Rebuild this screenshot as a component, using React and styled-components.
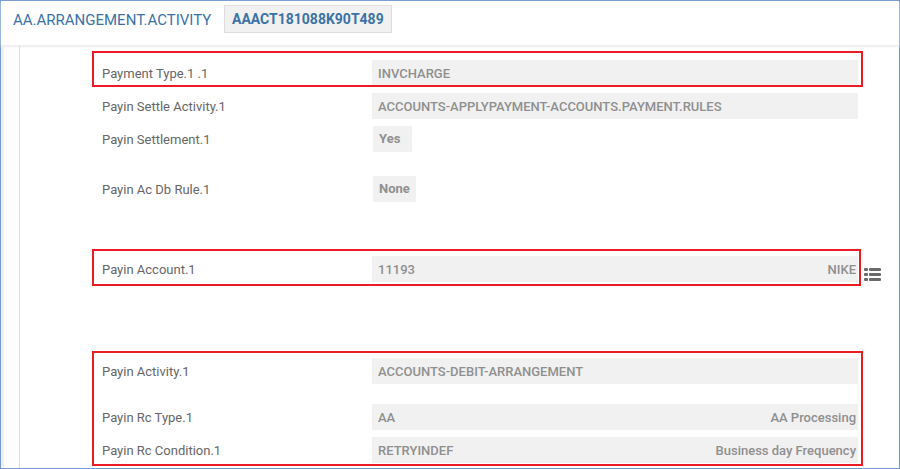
import React from 'react';
import styled, { createGlobalStyle } from 'styled-components';

const GlobalStyle = createGlobalStyle`
  * {
    box-sizing: border-box;
  }
  body {
    margin: 0;
    background: #fff;
    font-family: Roboto, 'Liberation Sans', sans-serif;
    font-size: 13px;
  }
`;

const Frame = styled.div`
  display: flex;
  flex-direction: column;
  min-height: 100vh;
  border: 1px solid #7199cd;
`;

const Header = styled.header`
  display: flex;
  align-items: flex-start;
  gap: 12px;
  height: 45px;
  padding: 4px 12px;
  color: #3a72a8;
  border-bottom: 1px solid #eee;
  box-shadow: 0 1px 2px #eee;
`;

const Title = styled.h1`
  min-width: 199px;
  margin: 0;
  font-size: 15px;
  font-weight: 400;
  line-height: 30px;
`;

const Reference = styled.span`
  padding: 0 7px;
  border: 1px solid #ddd;
  background: #f1f1f1;
  font-size: 14px;
  font-weight: 700;
  line-height: 26px;
`;

const Body = styled.main`
  flex: 1;
  display: flex;
  padding-left: 15px;
  border-left: 3px solid #f0eff1;
`;

const Form = styled.form`
  flex: 1;
  padding: 14px 18px 5px 82px;
  border-left: 1px solid #ddd;
`;

const Group = styled.div`
  position: relative;
  display: grid;
  gap: 7px;
  margin-bottom: ${props => props.$space || 0}px;
`;

// red marker drawn over the rows
const Marker = styled.div`
  position: absolute;
  top: ${props => props.$top}px;
  right: ${props => props.$right}px;
  bottom: ${props => props.$bottom}px;
  left: -10px;
  border: 2px solid #ed1c24;
  pointer-events: none;
`;

const Row = styled.div`
  display: grid;
  grid-template-columns: 264px 1fr 17px;
  column-gap: 6px;
  align-items: center;
  height: 26px;
  margin-bottom: ${props => props.$space || 0}px;
`;

const Label = styled.label`
  color: #666;
`;

const Field = styled.div`
  display: flex;
  align-items: center;
  height: 26px;
  padding: 0 2px 0 6px;
  background: #f1f1f1;
  color: #8f8f8f;
  font-weight: 500;
`;

const Input = styled.input`
  flex: 1;
  min-width: 0;
  padding: 0;
  border: 0;
  outline: 0;
  background: none;
  color: inherit;
  font: inherit;
`;

const Option = styled.output`
  justify-self: start;
  margin-left: 1px;
  padding: 0 6px;
  min-width: 39px;
  background: #f1f1f1;
  color: #8f8f8f;
  font-weight: 700;
  line-height: 26px;
`;

const ListButton = styled.button`
  display: flex;
  align-self: end;
  padding: 0;
  border: 0;
  background: none;
  color: #6a6a6a;
  cursor: pointer;
`;

const ListIcon = () => (
  <svg width="17" height="15" viewBox="0 0 17 15" fill="currentColor" aria-hidden="true">
    <rect y="1" width="4" height="3" rx="1" />
    <rect y="6" width="4" height="3" rx="1" />
    <rect y="11" width="4" height="3" rx="1" />
    <rect x="5" y="1" width="12" height="3" rx="1" />
    <rect x="5" y="6" width="12" height="3" rx="1" />
    <rect x="5" y="11" width="12" height="3" rx="1" />
  </svg>
);

const TextRow = ({ id, label, value, note, space, children }) => (
  <Row $space={space}>
    <Label htmlFor={id}>{label}</Label>
    <Field>
      <Input id={id} value={value} readOnly />
      {note && <span>{note}</span>}
    </Field>
    {children}
  </Row>
);

const OptionRow = ({ id, label, value, space }) => (
  <Row $space={space}>
    <Label htmlFor={id}>{label}</Label>
    <Option id={id}>{value}</Option>
  </Row>
);

const App = () => (
  <>
    <GlobalStyle />
    <Frame>
      <Header>
        <Title>AA.ARRANGEMENT.ACTIVITY</Title>
        <Reference>AAACT181088K90T489</Reference>
      </Header>
      <Body>
        <Form>
          <Group $space={7}>
            <TextRow id="payment-type" label="Payment Type.1 .1" value="INVCHARGE" />
            <Marker $top={-9} $right={18} $bottom={-1} />
          </Group>

          <Group $space={54}>
            <TextRow
              id="settle-activity"
              label="Payin Settle Activity.1"
              value="ACCOUNTS-APPLYPAYMENT-ACCOUNTS.PAYMENT.RULES"
            />
            <OptionRow id="settlement" label="Payin Settlement.1" value="Yes" space={17} />
            <OptionRow id="db-rule" label="Payin Ac Db Rule.1" value="None" />
          </Group>

          <Group $space={76}>
            <TextRow id="account" label="Payin Account.1" value="11193" note="NIKE">
              <ListButton type="button" aria-label="Account list">
                <ListIcon />
              </ListButton>
            </TextRow>
            <Marker $top={-7} $right={20} $bottom={-4} />
          </Group>

          <Group>
            <TextRow id="activity" label="Payin Activity.1" value="ACCOUNTS-DEBIT-ARRANGEMENT" space={13} />
            <TextRow id="rc-type" label="Payin Rc Type.1" value="AA" note="AA Processing" />
            <TextRow id="rc-condition" label="Payin Rc Condition.1" value="RETRYINDEF" note="Business day Frequency" />
            <Marker $top={-7} $right={18} $bottom={-3} />
          </Group>
        </Form>
      </Body>
    </Frame>
  </>
);

export default App;
